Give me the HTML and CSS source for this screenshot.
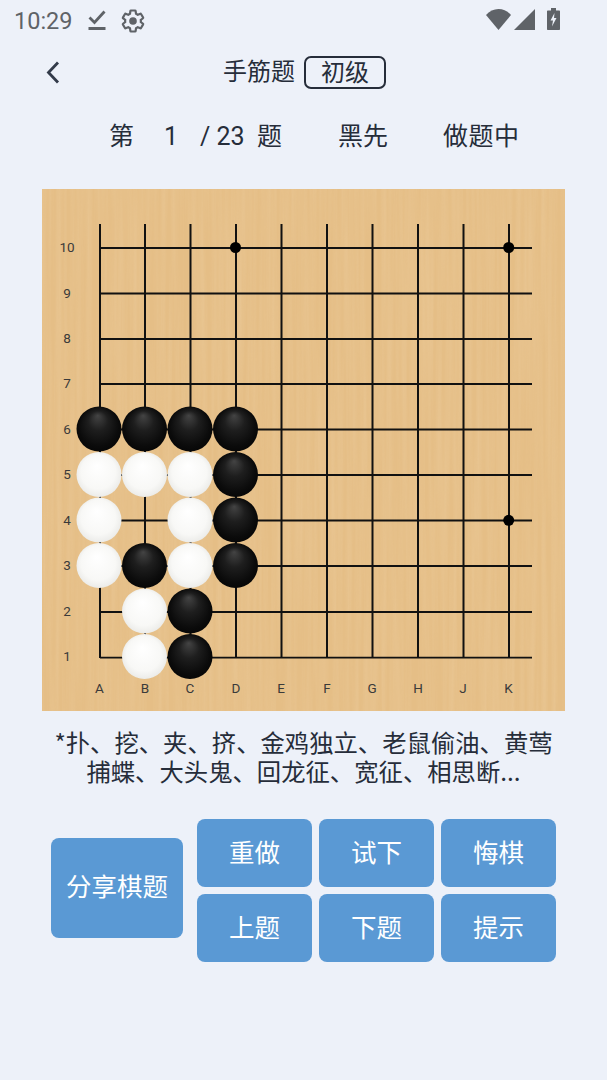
FILE: index.html
```html
<!DOCTYPE html>
<html lang="zh">
<head>
<meta charset="utf-8">
<title>手筋题</title>
<link rel="stylesheet" href="styles.css">
</head>
<body>
<div class="status">
  <div class="status-left">
    <span class="time">10:29</span>
    <svg class="ic-check" viewBox="0 0 18 20"><path d="M1.500 7.500l5 5L16.500 1.500" fill="none" stroke="#5f6368" stroke-width="2.800"/><rect x="0.500" y="17" width="17" height="3" fill="#5f6368"/></svg>
    <svg class="ic-gear" viewBox="1.600 1 20.800 22"><path d="M19.140 12.940c.04-.3.06-.61.06-.94 0-.32-.02-.64-.07-.94l2.030-1.580c.18-.14.23-.41.12-.61l-1.920-3.320c-.12-.22-.37-.29-.59-.22l-2.390.96c-.5-.38-1.030-.7-1.620-.94l-.36-2.540c-.04-.24-.24-.41-.48-.41h-3.840c-.24 0-.43.17-.47.41l-.36 2.540c-.59.24-1.130.57-1.620.94l-2.390-.96c-.22-.08-.47 0-.59.22L2.740 8.870c-.12.21-.08.47.12.61l2.030 1.580c-.05.3-.09.63-.09.94s.02.64.07.94l-2.030 1.580c-.18.14-.23.41-.12.61l1.920 3.320c.12.22.37.29.59.22l2.390-.96c.5.38 1.030.7 1.620.94l.36 2.540c.05.24.24.41.48.41h3.840c.24 0 .44-.17.47-.41l.36-2.540c.59-.24 1.130-.56 1.620-.94l2.390.96c.22.08.47 0 .59-.22l1.920-3.320c.12-.22.07-.47-.12-.61l-2.010-1.580z" fill="none" stroke="#5f6368" stroke-width="2"/><circle cx="12" cy="12" r="3.500" fill="#5f6368"/></svg>
  </div>
  <div class="status-right">
    <svg class="ic-wifi" viewBox="0 0 25 21"><path d="M0 6C6.500-2 18.500-2 25 6L12.500 21z" fill="#5f6368"/></svg>
    <svg class="ic-signal" viewBox="0 0 21 21"><path d="M21 0v21H0z" fill="#5f6368"/></svg>
    <svg class="ic-batt" viewBox="0 0 13 22"><path d="M4 0h5v2.500h3c.6 0 1 .4 1 1V21c0 .6-.4 1-1 1H1c-.6 0-1-.4-1-1V3.500c0-.6.4-1 1-1h3z" fill="#5f6368"/><path d="M7.500 5L3.500 12.500h2.500L5 18.500 9.500 10H7z" fill="#edf1f9"/></svg>
  </div>
</div>

<header class="topbar">
  <svg class="back" viewBox="0 0 16 24"><path d="M13 2.500L3.500 12.500 13 22.500" fill="none" stroke="#333b4a" stroke-width="2.800"/></svg>
  <div class="title">
    <span class="title-text">手筋题</span>
    <span class="level"><span class="level-text">初级</span></span>
  </div>
</header>

<div class="info">
  <span class="seq"><span class="di">第</span><span class="cur">1</span><span class="tot">/ 23</span><span class="ti">题</span></span>
  <span class="turn">黑先</span>
  <span class="state">做题中</span>
</div>

<svg class="board" viewBox="0 0 523 522" width="523" height="522">
  <defs>
    <filter id="grain" x="0" y="0" width="100%" height="100%">
      <feTurbulence type="fractalNoise" baseFrequency="0.2 0.005" numOctaves="3" seed="4"/>
      <feColorMatrix values="0 0 0 0 0.94  0 0 0 0 0.78  0 0 0 0 0.56  0.9 0 0 0 -0.25"/>
    </filter>
    <radialGradient id="blk" cx="0.5" cy="0.5" r="0.55" fx="0.47" fy="0.2">
      <stop offset="0" stop-color="#444"/>
      <stop offset="0.4" stop-color="#1e1e1e"/>
      <stop offset="0.8" stop-color="#0b0b0b"/>
      <stop offset="1" stop-color="#050505"/>
    </radialGradient>
    <radialGradient id="wht" cx="0.5" cy="0.5" r="0.55" fx="0.45" fy="0.3">
      <stop offset="0" stop-color="#ffffff"/>
      <stop offset="0.7" stop-color="#f8f8f6"/>
      <stop offset="1" stop-color="#e8e8e5"/>
    </radialGradient>
    <g id="b"><circle r="22.500" fill="url(#blk)"/></g>
    <g id="w"><circle r="22.500" fill="url(#wht)"/></g>
  </defs>
  <rect width="523" height="522" fill="#e5be86"/>
  <rect width="523" height="522" filter="url(#grain)" opacity="0.3"/>
  <g class="grid">
    <path class="v" d="M58 35V469M103 35V469M148.500 35V469M194 35V469M239.500 35V469M285 35V469M330.500 35V469M376 35V469M421.500 35V469M467 35V469"/>
    <path class="h" d="M58 59H490M58 104.500H490M58 150H490M58 195H490M58 240.500H490M58 286H490M58 331.500H490M58 377H490M58 423H490M58 468.700H490"/>
  </g>
  <circle cx="193.500" cy="58.500" r="5.500"/>
  <circle cx="466.700" cy="58.500" r="5.500"/>
  <circle cx="466.700" cy="331.300" r="5.500"/>
  <g class="coord">
    <text x="25" y="63">10</text><text x="25" y="108.500">9</text><text x="25" y="154">8</text><text x="25" y="199">7</text><text x="25" y="244.500">6</text><text x="25" y="290">5</text><text x="25" y="335.500">4</text><text x="25" y="381">3</text><text x="25" y="426.500">2</text><text x="25" y="472">1</text>
    <text x="57.500" y="504">A</text><text x="103" y="504">B</text><text x="148" y="504">C</text><text x="194" y="504">D</text><text x="239" y="504">E</text><text x="285" y="504">F</text><text x="330" y="504">G</text><text x="376" y="504">H</text><text x="421" y="504">J</text><text x="466.500" y="504">K</text>
  </g>
  <use href="#b" x="57" y="240"/><use href="#b" x="102.500" y="240"/><use href="#b" x="148" y="240"/><use href="#b" x="193.500" y="240"/>
  <use href="#w" x="57" y="285.500"/><use href="#w" x="102.500" y="285.500"/><use href="#w" x="148" y="285.500"/><use href="#b" x="193.500" y="285.500"/>
  <use href="#w" x="57" y="331"/><use href="#w" x="148" y="331"/><use href="#b" x="193.500" y="331"/>
  <use href="#w" x="57" y="376.500"/><use href="#b" x="102.500" y="376.500"/><use href="#w" x="148" y="376.500"/><use href="#b" x="193.500" y="376.500"/>
  <use href="#w" x="102.500" y="422"/><use href="#b" x="148" y="422"/>
  <use href="#w" x="102.500" y="467.500"/><use href="#b" x="148" y="467.500"/>
</svg>

<p class="desc">*扑、挖、夹、挤、金鸡独立、老鼠偷油、黄莺<br>捕蝶、大头鬼、回龙征、宽征、相思断...</p>

<div class="actions">
  <button class="btn share">分享棋题</button>
  <div class="btn-grid">
    <button class="btn">重做</button>
    <button class="btn">试下</button>
    <button class="btn">悔棋</button>
    <button class="btn">上题</button>
    <button class="btn">下题</button>
    <button class="btn">提示</button>
  </div>
</div>
</body>
</html>
```
FILE: styles.css
```css
* { box-sizing: border-box; }
html, body { margin: 0; padding: 0; }
body {
  width: 607px;
  height: 1080px;
  overflow: hidden;
  background: #edf1f9;
  color: #262d3a;
  font-family: "Noto Sans CJK SC", sans-serif;
}
.status {
  height: 42px;
  padding: 0 47px 0 14px;
  display: flex;
  justify-content: space-between;
  align-items: flex-start;
}
.status-left { display: flex; align-items: flex-start; }
.time {
  font-family: Roboto, sans-serif;
  font-size: 23.500px;
  line-height: 42px;
  color: #5f6368;
  width: 74px;
}
.ic-check { width: 18px; height: 20px; margin-top: 10px; }
.ic-gear { width: 24px; height: 24px; margin: 9px 0 0 15px; }
.status-right { display: flex; align-items: flex-start; }
.ic-wifi { width: 25px; height: 21px; margin-top: 9px; }
.ic-signal { width: 21px; height: 21px; margin: 9px 0 0 3px; }
.ic-batt { width: 13px; height: 22px; margin: 8px 0 0 12px; }
.topbar {
  height: 60px;
  position: relative;
  display: flex;
  justify-content: center;
  align-items: center;
}
.back { position: absolute; left: 45px; top: 18px; width: 16px; height: 24px; }
.title {
  display: flex;
  align-items: center;
  font-size: 24px;
  margin-left: 2px;
}
.title-text { line-height: 1; margin-top: -4px; }
.level {
  margin-left: 9px;
  width: 82px;
  height: 33px;
  border: 2px solid #262d3a;
  border-radius: 7px;
  display: flex;
  align-items: center;
  justify-content: center;
  line-height: 1;
}
.level-text { margin-top: -2px; }
.info {
  height: 87px;
  padding-bottom: 21px;
  display: flex;
  align-items: baseline;
  font-size: 25px;
  line-height: 64px;
}
.seq { display: flex; align-items: baseline; margin-left: 109px; width: 229px; }
.di { width: 55px; }
.cur, .tot { font-family: Roboto, sans-serif; }
.cur { width: 36px; }
.tot { width: 57px; }
.turn { width: 105px; }
.state { letter-spacing: 0.5px; }
.board { display: block; margin-left: 42px; }
.grid path { fill: none; stroke: #111; }
.grid .v { stroke-width: 2; }
.grid .h { stroke-width: 1.800; }
.coord text {
  font-family: Roboto, sans-serif;
  font-size: 13.500px;
  fill: #3a3a3a;
  text-anchor: middle;
}
.desc {
  margin: 16px 0 0;
  text-align: center;
  font-size: 24.350px;
  line-height: 29px;
}
.actions {
  margin: 34px 0 0 51px;
  display: flex;
  align-items: center;
}
.btn {
  border: 0;
  padding: 0 0 5px;
  background: #5a99d4;
  color: #fff;
  border-radius: 8px;
  font-family: "Noto Sans CJK SC", sans-serif;
  font-size: 25.500px;
  line-height: 1;
}
.share { width: 132px; height: 100px; margin: 0 14px 5px 0; padding-bottom: 7px; }
.btn-grid {
  display: grid;
  grid-template-columns: repeat(3, 115px);
  grid-auto-rows: 68px;
  column-gap: 7px;
  row-gap: 7px;
}
```
